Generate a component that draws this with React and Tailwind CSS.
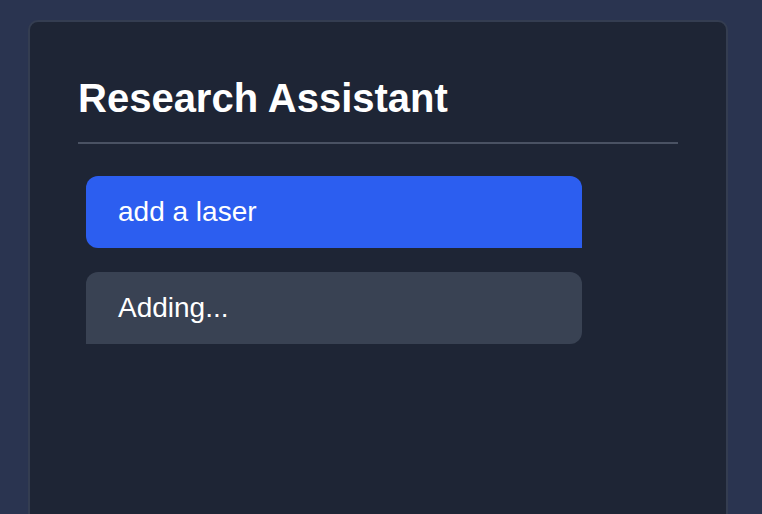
export default function App() {
  return (
    <div
      className="h-[514px] w-[762px] overflow-hidden bg-[#2a3450] pt-[20px] pl-[28px]"
      style={{ fontFamily: '"Liberation Sans", Arial, sans-serif' }}
    >
      <div className="h-[700px] w-[700px] rounded-[10px] border-2 border-[#343d51] bg-[#1e2535] p-[48px]">
        <h1 className="border-b-2 border-[#4a5263] pb-[16px] text-[40px] leading-[56px] font-bold text-white">
          Research Assistant
        </h1>
        <div className="mt-[32px] flex flex-col gap-[24px] pl-[8px]">
          <div className="w-[496px] rounded-[12px] rounded-br-none bg-[#2c5ef0] px-[32px] py-[15px] text-[28px] leading-[42px] text-white">
            add a laser
          </div>
          <div className="w-[496px] rounded-[12px] rounded-bl-none bg-[#394253] px-[32px] py-[15px] text-[28px] leading-[42px] text-white">
            Adding...
          </div>
        </div>
      </div>
    </div>
  );
}
